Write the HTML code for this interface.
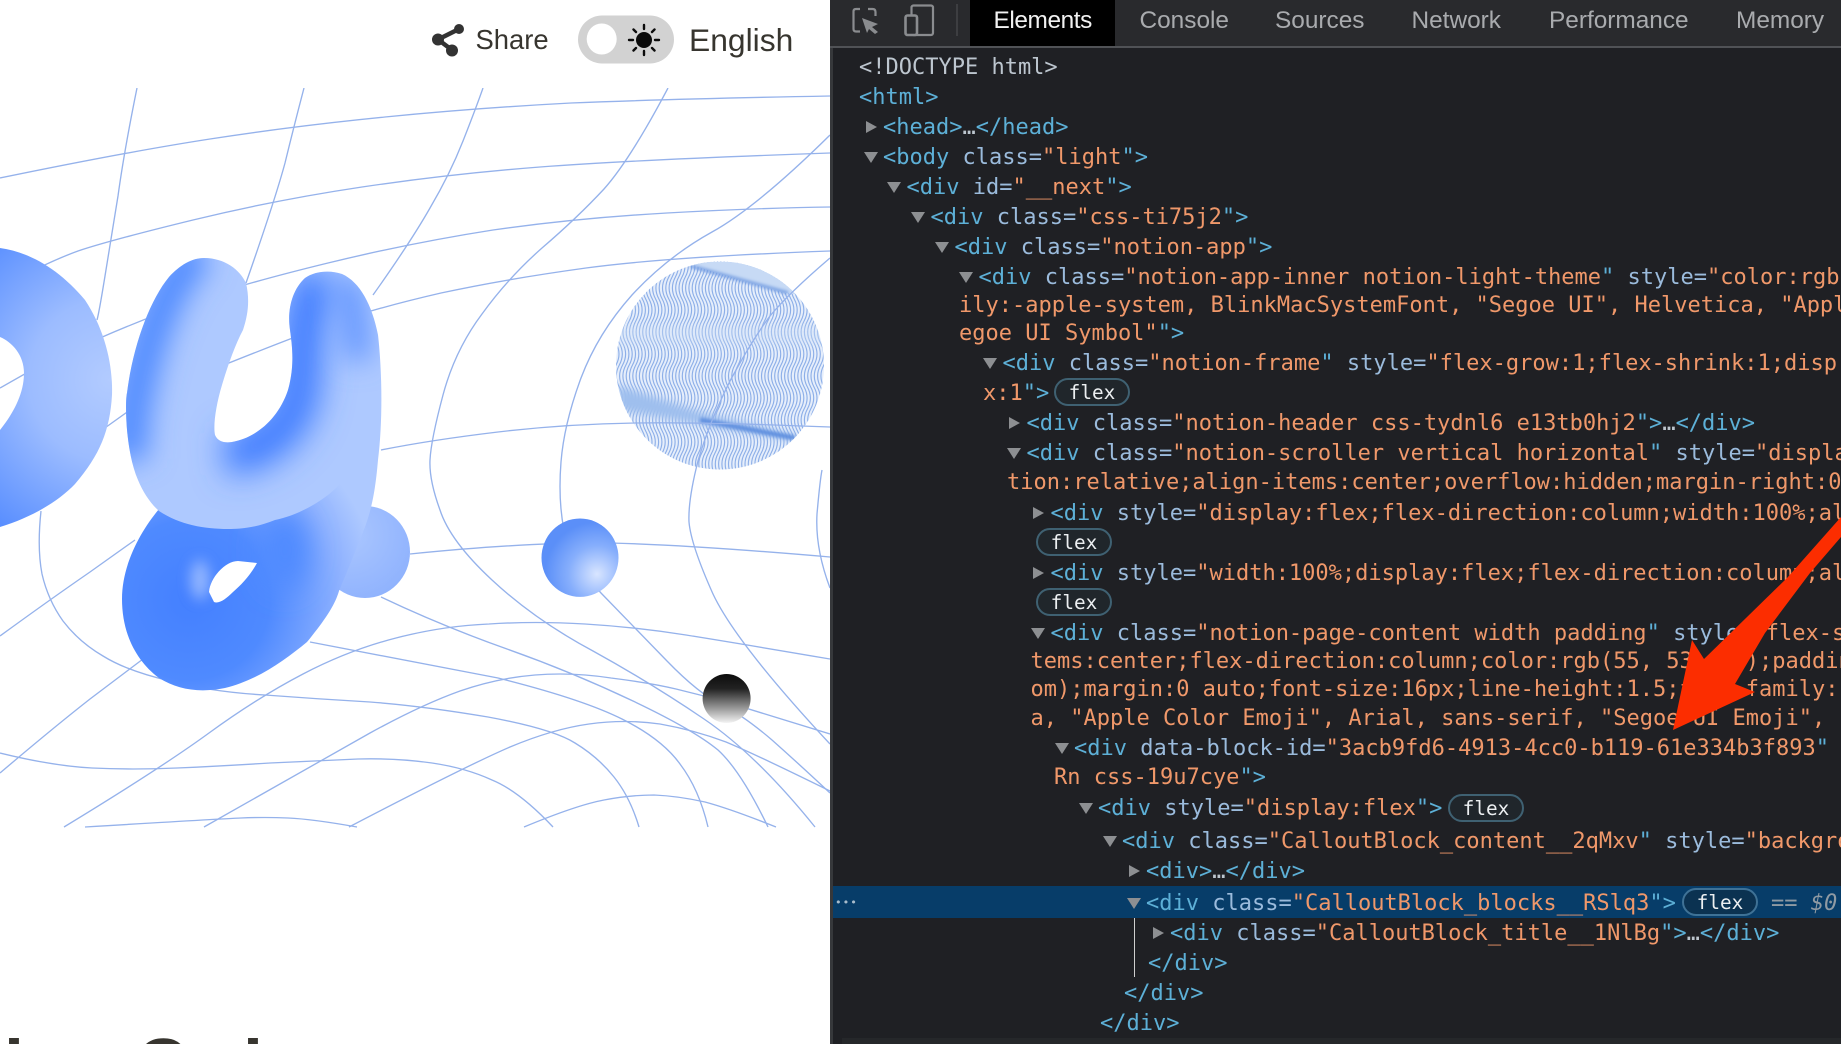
<!DOCTYPE html>
<html lang="en"><head><meta charset="utf-8"><title>DevTools</title>
<style>
html,body{margin:0;padding:0;width:1841px;height:1044px;overflow:hidden;background:#fff}
#root{position:absolute;left:0;top:0;width:1841px;height:1044px;overflow:hidden;font-family:"DejaVu Sans Mono","Liberation Mono",monospace;font-size:22px;color:#bdc6cf}
.abs{position:absolute}
#dev{position:absolute;left:830px;top:0;width:1011px;height:1044px;background:#1f2024;border-left:3px solid #36383b;box-sizing:border-box}
#bar{position:absolute;left:830px;top:0;width:1011px;height:46px;background:#292a2d;border-bottom:2px solid #505256}
.tab{position:absolute;top:0;height:46px;line-height:40px;font-family:"Liberation Sans",sans-serif;font-size:24.4px;color:#a9abae;white-space:pre}
#act{position:absolute;left:970px;top:0;width:145px;height:46px;background:#000}
.l{position:absolute;height:30px;line-height:30px;white-space:pre;margin-top:1px}
.l i{font-style:normal;color:#5db0d7}
.l b{font-weight:normal;color:#9bbbdc}
.l u{text-decoration:none;color:#f0986a}
.l em{position:absolute;width:0;height:0;display:block}
.r em{left:-17.5px;top:7.5px;border-left:11px solid #8d8f92;border-top:6.5px solid transparent;border-bottom:6.5px solid transparent}
.d em{left:-19.5px;top:9px;border-top:11px solid #8d8f92;border-left:7px solid transparent;border-right:7px solid transparent}
.bd{position:absolute;height:28px;line-height:25px;border:2px solid #3f6172;border-radius:15px;background:#20262b;box-sizing:border-box;color:#eceff1;font-size:19.4px;text-align:center;width:76px}
.head{position:absolute;font-family:"Liberation Sans",sans-serif;color:#37352f;white-space:pre}
.big{position:absolute;top:1038px;height:6px;overflow:hidden;font:bold 72px/55px "Liberation Sans",sans-serif;color:#37352f}
</style></head>
<body>
<div id="root">

<!-- left illustration -->
<svg class="abs" style="left:0;top:0" width="830" height="1044" viewBox="0 0 830 1044">
<defs>
<clipPath id="ill"><rect x="0" y="88" width="830" height="740"/></clipPath>
<clipPath id="wc"><ellipse cx="720" cy="365.5" rx="104" ry="104"/></clipPath>
<clipPath id="uc"><path d="M204 258C225 258 240 270 246 283C250 300 248 315 243 330C235 345 228 365 222 385C216 405 213 425 215 435C218 442 225 443 232 442C255 438 278 420 288 390C295 365 292 345 290 330C287 310 292 290 305 278C315 271 330 270 342 274C360 282 372 305 378 335C382 370 383 420 378 460L345 478C330 498 300 515 275 520C255 528 240 529 228 529C205 529 180 525 159 511C150 503 143 492 138 480C125 450 125 400 127 393C133 345 150 300 169 277C180 265 192 258 204 258Z"/></clipPath>
<clipPath id="rc"><path clip-rule="evenodd" d="M159 509C140 532 122 565 122 599C122 632 135 660 159 678C178 690 200 693 225 688C258 680 285 660 307 642C325 620 335 605 339 591C350 565 358 545 365 527C371 510 375 495 378 460L330 460ZM209 592C210 578 225 561 238 561L257 563C250 576 241 585 233 592C226 599 219 604 214 602Z"/></clipPath>
<filter id="b14" filterUnits="userSpaceOnUse" x="0" y="0" width="830" height="1044"><feGaussianBlur stdDeviation="14"/></filter>
<filter id="b16" filterUnits="userSpaceOnUse" x="0" y="0" width="830" height="1044"><feGaussianBlur stdDeviation="16"/></filter>
<filter id="b8" filterUnits="userSpaceOnUse" x="0" y="0" width="830" height="1044"><feGaussianBlur stdDeviation="7"/></filter>
<filter id="b4" filterUnits="userSpaceOnUse" x="0" y="0" width="830" height="1044"><feGaussianBlur stdDeviation="4"/></filter>
<filter id="b2" filterUnits="userSpaceOnUse" x="0" y="0" width="830" height="1044"><feGaussianBlur stdDeviation="1.6"/></filter>
<radialGradient id="og" gradientUnits="userSpaceOnUse" cx="110" cy="380" r="180"><stop offset="0" stop-color="#b2cbff"/><stop offset=".45" stop-color="#9cbcff"/><stop offset="1" stop-color="#5a8fff"/></radialGradient>
<radialGradient id="rg" gradientUnits="userSpaceOnUse" cx="190" cy="600" r="190"><stop offset="0" stop-color="#4480ff"/><stop offset=".42" stop-color="#4f8aff"/><stop offset=".8" stop-color="#8fb2ff"/><stop offset="1" stop-color="#aec9ff"/></radialGradient>
<radialGradient id="sg" gradientUnits="userSpaceOnUse" cx="350" cy="535" r="70"><stop offset="0" stop-color="#aac6ff"/><stop offset="1" stop-color="#8fb2fd"/></radialGradient>
<radialGradient id="bg" gradientUnits="userSpaceOnUse" cx="597" cy="574" r="52"><stop offset="0" stop-color="#d8e5ff"/><stop offset=".55" stop-color="#86aefc"/><stop offset="1" stop-color="#5b8ff8"/></radialGradient>
<linearGradient id="kg" x1="0" y1="0" x2="0" y2="1"><stop offset="0" stop-color="#0c0c0c"/><stop offset=".3" stop-color="#222"/><stop offset=".7" stop-color="#999"/><stop offset="1" stop-color="#f4f4f4"/></linearGradient>
<path id="w" fill="none" stroke="#8dafe8" stroke-width="1.15" d="M0 255q6 11 0 22t0 22t0 22t0 22t0 22t0 22t0 22t0 22t0 22t0 22"/>
<g id="t10"><use href="#w"/><use href="#w" x="3.3"/><use href="#w" x="6.6"/><use href="#w" x="9.9"/><use href="#w" x="13.2"/><use href="#w" x="16.5"/><use href="#w" x="19.8"/><use href="#w" x="23.1"/></g>
</defs>

<g clip-path="url(#ill)">
  <!-- wave sphere -->
  <g clip-path="url(#wc)">
    <rect x="610" y="255" width="220" height="220" fill="#e6eefb"/>
    <use href="#t10" x="616"/><use href="#t10" x="642.4"/><use href="#t10" x="668.8"/><use href="#t10" x="695.2"/><use href="#t10" x="721.6"/><use href="#t10" x="748"/><use href="#t10" x="774.4"/><use href="#t10" x="800.8"/>
    <polygon points="688,262 800,262 800,295 785,293 700,268" fill="#c7daf5"/>
    <path d="M690 266L788 293" stroke="#6f9ae0" stroke-width="3" filter="url(#b2)"/>
    <polygon points="617,385 700,412 797,436 790,440 620,410" fill="#9fbfee" filter="url(#b4)"/>
    <path d="M700 420L795 438" stroke="#5f8fdf" stroke-width="5" filter="url(#b2)"/>
    <rect x="610" y="325" width="220" height="20" fill="#cfe0f7" opacity=".35" filter="url(#b4)"/>
  </g>

  <!-- grid -->
  <g fill="none" stroke="#95b2eb" stroke-width="1.35">
    <path d="M0 178Q126 152 210 139Q294 126 385 117Q476 108 571 103Q667 99 830 96"/>
    <path d="M0 288Q45 263 78 251Q111 240 193 220Q275 200 362 187Q450 174 540 167Q630 160 830 153"/>
    <path d="M100 338Q146 318 196 300Q246 283 328 263Q410 243 493 230Q577 218 667 213Q757 208 830 207"/>
    <path d="M0 388L30 371M214 369Q291 338 333 323Q376 308 441 293Q506 279 586 268Q667 257 830 251"/>
    <path d="M95 435L130 410M381 450Q431 440 498 432Q566 424 635 423Q704 422 830 427"/>
    <path d="M0 636Q48 601 90 572L135 540M410 554Q529 542 610 543Q691 545 830 557"/>
    <path d="M0 773Q53 728 90 699L143 659"/>
    <path d="M64 827Q161 768 209 733Q257 698 303 674Q349 650 396 638Q442 626 489 624Q535 621 585 624Q635 627 686 635Q736 643 830 659"/>
    <path d="M204 827Q320 761 370 733Q421 705 460 691Q498 678 535 675Q572 672 611 678Q651 683 676 689Q701 695 726 702Q752 710 830 734"/>
    <path d="M349 827Q466 766 510 747Q553 729 589 724Q625 719 660 724Q694 730 726 742Q757 755 830 791"/>
    <path d="M524 827Q577 805 604 800Q630 795 654 795Q678 796 705 802Q731 809 776 827"/>
    <path d="M0 753Q53 766 92 768Q132 770 177 768Q222 766 270 763Q318 761 358 759Q397 758 432 763Q466 768 492 780Q519 791 553 827"/>
    <path d="M85 827Q217 819 241 818Q265 817 288 818Q312 819 357 827"/>
    <path d="M41 511Q37 548 42 574Q48 600 63 621Q79 642 103 656Q127 671 170 681Q212 692 265 695Q318 699 370 702Q423 706 488 717Q553 729 575 743Q598 757 614 777Q630 797 639 827"/>
    <path d="M310 642L498 678Q582 699 622 719Q662 739 680 764Q699 789 708 827"/>
    <path d="M381 597Q442 626 507 649Q572 672 633 701Q694 730 718 750Q741 771 768 827"/>
    <path d="M668 88Q630 160 604 189Q577 218 542 248Q508 278 482 314Q455 350 443 395Q431 440 430 460Q429 480 440 510Q450 541 492 580Q535 620 593 651Q651 683 704 719Q757 755 815 827"/>
    <path d="M830 135Q757 207 712 232Q667 257 632 295Q598 333 581 378Q564 424 561 462Q558 500 564 530Q575 565 601 593Q635 628 667 661Q699 694 722 705Q744 716 772 740Q799 764 830 793"/>
    <path d="M830 258Q789 293 770 316Q752 340 730 381Q709 423 698 461Q688 500 689 522Q691 545 713 594Q736 643 830 744"/>
    <path d="M822 470Q820 480 817 514Q815 548 830 588"/>
    <path d="M137 88Q124 152 118 196Q111 240 105 276Q99 313 97 320"/>
    <path d="M304 88Q294 126 285 163Q275 200 246 283"/>
    <path d="M483 88Q476 108 463 141Q450 174 430 208Q410 243 373 295"/>
  </g>

  <!-- o shape -->
  <path fill="url(#og)" d="M0 248C30 252 60 270 85 300C105 330 113 365 112 395C110 430 100 455 75 484C58 502 30 518 0 527L0 430C12 415 24 395 24 373C24 355 12 342 0 337Z"/>

  <!-- sphere behind y -->
  <ellipse cx="365" cy="552" rx="45" ry="46" fill="url(#sg)"/>

  <!-- lower ring -->
  <g clip-path="url(#rc)">
    <rect x="110" y="450" width="280" height="250" fill="url(#rg)"/>
    <ellipse cx="285" cy="550" rx="24" ry="40" fill="#4f8aff" filter="url(#b14)"/>
    <ellipse cx="200" cy="580" rx="9" ry="20" fill="#b4ccff" filter="url(#b8)" opacity=".75"/>
  </g>

  <!-- upper U -->
  <g clip-path="url(#uc)">
    <rect x="110" y="240" width="290" height="300" fill="#aec9ff"/>
    <path d="M200 250C175 270 150 320 135 395C130 420 128 440 130 460" fill="none" stroke="#4f8aff" stroke-width="36" filter="url(#b14)"/>
    <path d="M320 275C305 300 300 345 300 380C298 420 270 450 225 455" fill="none" stroke="#3f7dff" stroke-width="42" filter="url(#b16)"/>
    <path d="M345 280C352 300 356 330 358 360" fill="none" stroke="#5f93ff" stroke-width="26" filter="url(#b14)"/>
  </g>

  <!-- small balls -->
  <ellipse cx="580" cy="557.7" rx="38.5" ry="39.2" fill="url(#bg)"/>
  <ellipse cx="726.6" cy="698.5" rx="24" ry="24.5" fill="url(#kg)"/>
</g>

<!-- share icon -->
<g fill="#333" stroke="#333">
  <path d="M459 29L438 39.5L452 50" fill="none" stroke-width="4.5"/>
  <circle cx="459" cy="29" r="5" stroke="none"/>
  <circle cx="438" cy="39.5" r="6" stroke="none"/>
  <circle cx="452" cy="50.5" r="6" stroke="none"/>
</g>
<!-- toggle -->
<rect x="578" y="15.5" width="96" height="48" rx="24" fill="#d2d2d2"/>
<ellipse cx="601.7" cy="39" rx="15" ry="15.5" fill="#fff"/>
<circle cx="644" cy="40" r="8" fill="#0b0b0b"/>
<g stroke="#0b0b0b" stroke-width="2.4" stroke-linecap="round">
  <path d="M644 25V29M644 51V55M629 40H633M655 40H659M633.5 29.5L636 32M652 48L654.5 50.5M633.5 50.5L636 48M652 32L654.5 29.5"/>
</g>
</svg>

<div class="head" style="left:475.5px;top:24px;font-size:27.4px;line-height:32px">Share</div>
<div class="head" style="left:689px;top:22px;font-size:31.8px;line-height:36px">English</div>

<div class="big" style="left:4px">l</div>
<div class="big" style="left:136px">C</div>
<div class="big" style="left:243px">l</div>

<!-- devtools -->
<div id="dev"></div>
<div id="bar"></div>
<div id="act"></div>
<svg class="abs" style="left:830px;top:0" width="140" height="46" viewBox="830 0 140 46">
  <g fill="none" stroke="#8a8c8f" stroke-width="2.2">
    <path d="M860 9H856Q853.5 9 853.5 11.5V29Q853.5 31.5 856 31.5H860M868 9H872.5Q875.5 9 875.5 12V16"/>
    <rect x="911.5" y="5.5" width="21.5" height="29.5" rx="2"/>
    <rect x="905.5" y="15.5" width="11.5" height="19.5" rx="2" fill="#292a2d" stroke-width="2.6"/>
  </g>
  <polygon points="862,18 878,24 872,27 878,32 875,34 869,29 867,33" fill="#8a8c8f"/>
  <rect x="956" y="4" width="2" height="32" fill="#3d3e41"/>
</svg>
<div class="tab" style="left:993.5px;color:#f2f2f2;letter-spacing:-.4px;top:1px">Elements</div>
<div class="tab" style="left:1139.5px;top:1px">Console</div>
<div class="tab" style="left:1275px;top:1px">Sources</div>
<div class="tab" style="left:1411.5px;top:1px">Network</div>
<div class="tab" style="left:1549px;top:1px">Performance</div>
<div class="tab" style="left:1736px;top:1px">Memory</div>

<div class="abs" style="left:833px;top:886px;width:1008px;height:32px;background:#073d69"></div>
<div class="abs" style="left:1134px;top:918px;width:1px;height:59px;background:#cfcfcf"></div>
<div class="abs" style="left:835px;top:894px;font-size:11px;line-height:18px;color:#a9bccb;letter-spacing:1px">•••</div>
<div class="abs" style="left:842px;top:1038px;width:999px;height:6px;background:#25272a"></div>

<div class="l" style="top:52px;left:859px">&lt;!DOCTYPE html&gt;</div>
<div class="l" style="top:82px;left:859px"><i>&lt;html&gt;</i></div>
<div class="l r" style="top:112px;left:883px"><em></em><i>&lt;head&gt;</i>…<i>&lt;/head&gt;</i></div>
<div class="l d" style="top:142px;left:883px"><em></em><i>&lt;body </i><b>class=</b><u>"light</u><i>"&gt;</i></div>
<div class="l d" style="top:172px;left:906.5px"><em></em><i>&lt;div </i><b>id=</b><u>"__next</u><i>"&gt;</i></div>
<div class="l d" style="top:202px;left:930.5px"><em></em><i>&lt;div </i><b>class=</b><u>"css-ti75j2</u><i>"&gt;</i></div>
<div class="l d" style="top:232px;left:954.5px"><em></em><i>&lt;div </i><b>class=</b><u>"notion-app</u><i>"&gt;</i></div>
<div class="l d" style="top:262px;left:978.5px"><em></em><i>&lt;div </i><b>class=</b><u>"notion-app-inner notion-light-theme</u><i>" </i><b>style=</b><u>"color:rgb</u></div>
<div class="l" style="top:290px;left:959px"><u>ily:-apple-system, BlinkMacSystemFont, "Segoe UI", Helvetica, "Appl</u></div>
<div class="l" style="top:318px;left:959px"><u>egoe UI Symbol"</u><i>"&gt;</i></div>
<div class="l d" style="top:348px;left:1002.5px"><em></em><i>&lt;div </i><b>class=</b><u>"notion-frame</u><i>" </i><b>style=</b><u>"flex-grow:1;flex-shrink:1;disp</u></div>
<div class="l" style="top:378px;left:983px"><u>x:1</u><i>"&gt;</i></div>
<div class="bd" style="left:1054px;top:378px">flex</div>
<div class="l r" style="top:408px;left:1026.5px"><em></em><i>&lt;div </i><b>class=</b><u>"notion-header css-tydnl6 e13tb0hj2</u><i>"&gt;</i>…<i>&lt;/div&gt;</i></div>
<div class="l d" style="top:438px;left:1026.5px"><em></em><i>&lt;div </i><b>class=</b><u>"notion-scroller vertical horizontal</u><i>" </i><b>style=</b><u>"displa</u></div>
<div class="l" style="top:467px;left:1007px"><u>tion:relative;align-items:center;overflow:hidden;margin-right:0</u></div>
<div class="l r" style="top:498px;left:1050.5px"><em></em><i>&lt;div </i><b>style=</b><u>"display:flex;flex-direction:column;width:100%;al</u></div>
<div class="bd" style="left:1036px;top:528px">flex</div>
<div class="l r" style="top:558px;left:1050.5px"><em></em><i>&lt;div </i><b>style=</b><u>"width:100%;display:flex;flex-direction:column;al</u></div>
<div class="bd" style="left:1036px;top:588px">flex</div>
<div class="l d" style="top:618px;left:1050.5px"><em></em><i>&lt;div </i><b>class=</b><u>"notion-page-content width padding</u><i>" </i><b>style=</b><u>"flex-s</u></div>
<div class="l" style="top:646px;left:1030.5px"><u>tems:center;flex-direction:column;color:rgb(55, 53, 47);paddin</u></div>
<div class="l" style="top:674px;left:1030.5px"><u>om);margin:0 auto;font-size:16px;line-height:1.5;font-family:-</u></div>
<div class="l" style="top:703px;left:1030.5px"><u>a, "Apple Color Emoji", Arial, sans-serif, "Segoe UI Emoji", "</u></div>
<div class="l d" style="top:733px;left:1074px"><em></em><i>&lt;div </i><b>data-block-id=</b><u>"3acb9fd6-4913-4cc0-b119-61e334b3f893</u><i>"</i></div>
<div class="l" style="top:762px;left:1054px"><u>Rn css-19u7cye</u><i>"&gt;</i></div>
<div class="l d" style="top:793px;left:1098px"><em></em><i>&lt;div </i><b>style=</b><u>"display:flex</u><i>"&gt;</i></div>
<div class="bd" style="left:1448px;top:794px">flex</div>
<div class="l d" style="top:826px;left:1122px"><em></em><i>&lt;div </i><b>class=</b><u>"CalloutBlock_content__2qMxv</u><i>" </i><b>style=</b><u>"backgro</u></div>
<div class="l r" style="top:856px;left:1146px"><em></em><i>&lt;div&gt;</i>…<i>&lt;/div&gt;</i></div>
<div class="l d" style="top:888px;left:1146px"><em></em><i>&lt;div </i><b>class=</b><u>"CalloutBlock_blocks__RSlq3</u><i>"&gt;</i></div>
<div class="bd" style="left:1682px;top:888px;background:#0b3251;border-color:#3f7296">flex</div>
<div class="l" style="top:888px;left:1771px;color:#8f9aa3">== <span style="font-style:italic">$0</span></div>
<div class="l r" style="top:918px;left:1170px"><em></em><i>&lt;div </i><b>class=</b><u>"CalloutBlock_title__1NlBg</u><i>"&gt;</i>…<i>&lt;/div&gt;</i></div>
<div class="l" style="top:948px;left:1148px"><i>&lt;/div&gt;</i></div>
<div class="l" style="top:978px;left:1124px"><i>&lt;/div&gt;</i></div>
<div class="l" style="top:1008px;left:1100px"><i>&lt;/div&gt;</i></div>

<!-- red arrow -->
<svg class="abs" style="left:1640px;top:500px" width="201" height="240" viewBox="1640 500 201 240">
  <polygon fill="#fc2d00" points="1841,517 1787,578 1704,659 1692,640 1673,730 1755,692 1735,684 1765,633 1810,573 1841,537"/>
</svg>
</div>
</body></html>
